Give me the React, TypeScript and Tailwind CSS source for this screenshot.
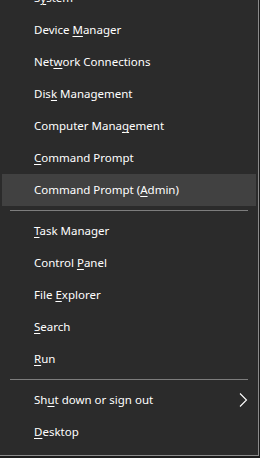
import React from "react";

type Item = { pre: string; key: string; post: string; hl?: boolean; arrow?: boolean };

const Row = ({ it }: { it: Item }) => (
  <div
    className={
      "h-[32px] flex items-center pl-[32px] pr-[8px] mx-[2px] text-[11.5px] text-white leading-none " +
      (it.hl ? "bg-[#414141]" : "")
    }
  >
    <span className="flex-1 whitespace-nowrap">
      {it.pre}
      <span className="underline underline-offset-[2px] decoration-1">{it.key}</span>
      {it.post}
    </span>
    {it.arrow && (
      <svg width="10" height="16" viewBox="0 0 10 16">
        <path d="M2 1.5 L8.5 8 L2 14.5" stroke="#ffffff" strokeWidth="1.1" fill="none" />
      </svg>
    )}
  </div>
);

const Sep = () => (
  <div className="py-[4px] px-[8px]">
    <div className="h-[1px] ml-[2px] w-[238px] bg-[#7d7d7d]" />
  </div>
);

const g1: Item[] = [
  { pre: "S", key: "y", post: "stem" },
  { pre: "Device ", key: "M", post: "anager" },
  { pre: "Net", key: "w", post: "ork Connections" },
  { pre: "Dis", key: "k", post: " Management" },
  { pre: "Computer Mana", key: "g", post: "ement" },
  { pre: "", key: "C", post: "ommand Prompt" },
  { pre: "Command Prompt (", key: "A", post: "dmin)", hl: true },
];
const g2: Item[] = [
  { pre: "", key: "T", post: "ask Manager" },
  { pre: "Control ", key: "P", post: "anel" },
  { pre: "File ", key: "E", post: "xplorer" },
  { pre: "", key: "S", post: "earch" },
  { pre: "", key: "R", post: "un" },
];
const g3: Item[] = [
  { pre: "Sh", key: "u", post: "t down or sign out", arrow: true },
  { pre: "", key: "D", post: "esktop" },
];

export default function App() {
  return (
    <div className="w-[260px] h-[458px] bg-[#1c1c1c] overflow-hidden" style={{ fontFamily: '"Noto Sans", "Open Sans", sans-serif' }}>
      <div className="w-[259px] h-[456px] bg-[#2b2b2b] border-r border-b border-[#8c8c8c] overflow-hidden">
        <div className="-mt-[18px]">
          {g1.map((it, i) => (
            <Row key={i} it={it} />
          ))}
          <Sep />
          {g2.map((it, i) => (
            <Row key={i} it={it} />
          ))}
          <Sep />
          {g3.map((it, i) => (
            <Row key={i} it={it} />
          ))}
        </div>
      </div>
    </div>
  );
}
